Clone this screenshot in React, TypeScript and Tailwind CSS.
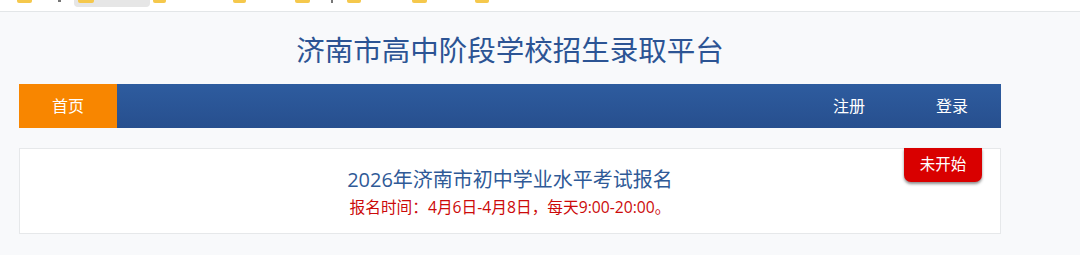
import React from 'react';

const FOLDERS = [
  { x: 17, w: 15 },
  { x: 78, w: 16 },
  { x: 153, w: 13 },
  { x: 233, w: 13 },
  { x: 295, w: 15 },
  { x: 347, w: 14 },
  { x: 412, w: 15 },
  { x: 475, w: 14 },
];

function BookmarkStrip() {
  return (
    <div className="relative h-[12px] bg-white border-b border-[#e3e6e8] overflow-hidden">
      {/* active tab */}
      <div className="absolute left-[74px] top-0 w-[76px] h-[7px] rounded-b-[4px] bg-[#e6e6e6]" />
      {FOLDERS.map((f, i) => (
        <div
          key={i}
          className="absolute top-0 h-[3px] rounded-b-[2px] bg-[#f5c84c]"
          style={{ left: f.x, width: f.w }}
        />
      ))}
      <div className="absolute left-[58px] top-0 w-[3px] h-[2px] bg-[#777]" />
      <div className="absolute left-[331px] top-0 w-[2px] h-[3px] bg-[#777]" />
    </div>
  );
}

export default function App() {
  return (
    <div
      className="w-[1080px] h-[255px] bg-[#f8f9fb] overflow-hidden"
      style={{ fontFamily: '"Open Sans", "Noto Sans CJK SC", sans-serif' }}
    >
      <BookmarkStrip />

      <div className="ml-[19px] w-[982px]">
        {/* Site title */}
        <h1 className="h-[72px] pt-[4px] flex items-center justify-center text-[28.5px] leading-none text-[#2c5494]">
          济南市高中阶段学校招生录取平台
        </h1>

        {/* Nav */}
        <nav className="h-[44px] flex bg-gradient-to-b from-[#2e5c9f] to-[#274f8e] text-white text-[16px]">
          <a className="w-[98px] flex items-center justify-center bg-[#f88600]">首页</a>
          <div className="flex-1" />
          <a className="w-[98px] mr-[5px] flex items-center justify-center">注册</a>
          <a className="w-[98px] flex items-center justify-center">登录</a>
        </nav>

        {/* Exam card */}
        <div className="relative mt-[20px] h-[86px] bg-white border border-[#e6e8ea] flex flex-col items-center">
          <div className="mt-[19px] text-[20px] leading-[24px] text-[#2f5a97]">
            2026年济南市初中学业水平考试报名
          </div>
          <div className="mt-[5px] text-[15.7px] leading-[20px] text-[#cc0a0a]">
            报名时间：4月6日-4月8日，每天9:00-20:00。
          </div>
          <span className="absolute right-[18px] -top-px w-[78px] h-[34px] flex items-center justify-center rounded-b-[7px] bg-[#d90000] text-white text-[15.5px] shadow-[0_2px_3px_rgba(0,0,0,0.45)]">
            未开始
          </span>
        </div>
      </div>
    </div>
  );
}
